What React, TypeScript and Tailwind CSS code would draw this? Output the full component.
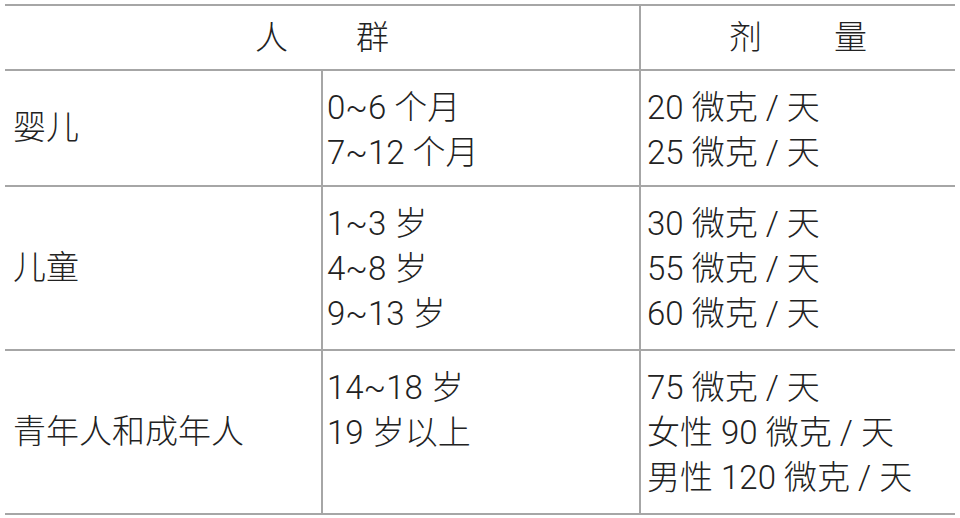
const rows = [
  {
    group: '婴儿',
    ages: ['0~6 个月', '7~12 个月'],
    doses: ['20 微克 / 天', '25 微克 / 天'],
    height: 'h-[116px]',
  },
  {
    group: '儿童',
    ages: ['1~3 岁', '4~8 岁', '9~13 岁'],
    doses: ['30 微克 / 天', '55 微克 / 天', '60 微克 / 天'],
    height: 'h-[164px]',
  },
  {
    group: '青年人和成年人',
    ages: ['14~18 岁', '19 岁以上'],
    doses: ['75 微克 / 天', '女性 90 微克 / 天', '男性 120 微克 / 天'],
    height: 'h-[164px]',
  },
]

export default function App() {
  return (
    <div
      className="h-[518px] w-[960px] overflow-hidden bg-white pl-[5px] pt-[4px] text-[33px] font-light text-[#222]"
      style={{ fontFamily: "Roboto, 'Noto Sans CJK SC', sans-serif" }}
    >
      <div className="w-[950px] border-t-2 border-[#a6a6a6]">
        {/* 表头 */}
        <div className="flex h-[65px] border-b-2 border-[#a6a6a6]">
          <div className="flex w-[634px] items-center justify-center gap-[68px]">
            <span>人</span>
            <span>群</span>
          </div>
          <div className="flex flex-1 items-center justify-center gap-[72px] border-l-2 border-[#a6a6a6]">
            <span>剂</span>
            <span>量</span>
          </div>
        </div>

        {rows.map((row) => (
          <div key={row.group} className={`flex border-b-2 border-[#a6a6a6] ${row.height}`}>
            <div className="flex w-[316px] items-center pl-[8px]">{row.group}</div>
            <div className="w-[318px] border-l-2 border-[#a6a6a6] pl-[4px] pt-[14px] leading-[45px]">
              {row.ages.map((a) => (
                <div key={a}>{a}</div>
              ))}
            </div>
            <div className="flex-1 border-l-2 border-[#a6a6a6] pl-[6px] pt-[14px] leading-[45px]">
              {row.doses.map((d) => (
                <div key={d}>{d}</div>
              ))}
            </div>
          </div>
        ))}
      </div>
    </div>
  )
}
